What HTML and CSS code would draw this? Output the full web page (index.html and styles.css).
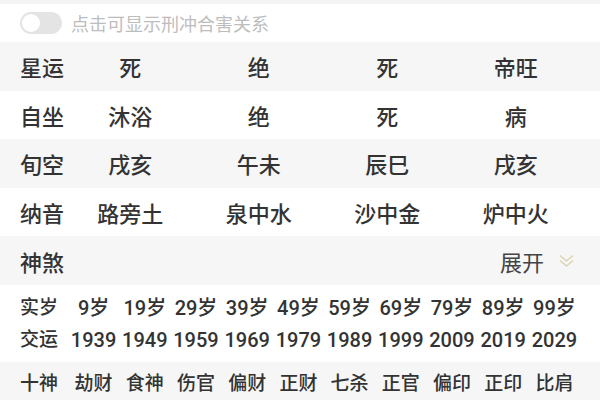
FILE: index.html
```html
<!DOCTYPE html>
<html lang="zh">
<head>
<meta charset="utf-8">
<link rel="stylesheet" href="styles.css">
</head>
<body>
<div class="page">
  <div class="top-strip"></div>
  <div class="toggle-row">
    <span class="switch"><span class="knob"></span></span>
    <span class="hint">点击可显示刑冲合害关系</span>
  </div>
  <div class="row gray">
    <span class="label">星运</span><span class="cell">死</span><span class="cell">绝</span><span class="cell">死</span><span class="cell">帝旺</span>
  </div>
  <div class="row">
    <span class="label">自坐</span><span class="cell">沐浴</span><span class="cell">绝</span><span class="cell">死</span><span class="cell">病</span>
  </div>
  <div class="row gray">
    <span class="label">旬空</span><span class="cell">戌亥</span><span class="cell">午未</span><span class="cell">辰巳</span><span class="cell">戌亥</span>
  </div>
  <div class="row">
    <span class="label">纳音</span><span class="cell">路旁土</span><span class="cell">泉中水</span><span class="cell">沙中金</span><span class="cell">炉中火</span>
  </div>
  <div class="shensha gray">
    <span class="label">神煞</span>
    <span class="expand">展开
      <svg class="chev" width="17" height="14" viewBox="0 0 17 14"><path d="M2 1.5 L8.5 7 L15 1.5 M2 6.5 L8.5 12 L15 6.5" fill="none" stroke="#d9d0ab" stroke-width="1.3"/></svg>
    </span>
  </div>
  <div class="luck">
    <div class="grid">
      <span class="label">实岁</span><span>9岁</span><span>19岁</span><span>29岁</span><span>39岁</span><span>49岁</span><span>59岁</span><span>69岁</span><span>79岁</span><span>89岁</span><span>99岁</span>
    </div>
    <div class="grid">
      <span class="label">交运</span><span>1939</span><span>1949</span><span>1959</span><span>1969</span><span>1979</span><span>1989</span><span>1999</span><span>2009</span><span>2019</span><span>2029</span>
    </div>
  </div>
  <div class="gods gray">
    <div class="grid">
      <span class="label">十神</span><span>劫财</span><span>食神</span><span>伤官</span><span>偏财</span><span>正财</span><span>七杀</span><span>正官</span><span>偏印</span><span>正印</span><span>比肩</span>
    </div>
  </div>
</div>
</body>
</html>
```
FILE: styles.css
```css
html, body {
  margin: 0;
  padding: 0;
  background: #ffffff;
}
body {
  font-family: "Noto Sans CJK SC", "Noto Sans", sans-serif;
  color: #333333;
  width: 600px;
  height: 400px;
  overflow: hidden;
}
.gray {
  background: #f6f6f6;
}
.top-strip {
  height: 4px;
  background: #f4f4f4;
}
.toggle-row {
  height: 38px;
  display: flex;
  align-items: center;
  padding-left: 20px;
  gap: 9px;
}
.switch {
  width: 42px;
  height: 22px;
  border-radius: 11px;
  background: #e4e4e4;
  display: flex;
  align-items: center;
  padding-left: 2px;
  box-sizing: border-box;
}
.knob {
  width: 18px;
  height: 18px;
  border-radius: 50%;
  background: #ffffff;
}
.hint {
  font-size: 18px;
  color: #bdbdbd;
  line-height: 1;
}
.row {
  height: 48.6px;
  display: grid;
  grid-template-columns: 46px repeat(4, 1fr);
  align-items: center;
  padding: 0 20px;
  font-size: 22px;
  font-weight: 500;
}
.label {
  font-weight: 500;
  white-space: nowrap;
}
.cell {
  text-align: center;
}
.shensha {
  height: 48.6px;
  display: flex;
  align-items: center;
  justify-content: space-between;
  padding: 0 25px 0 20px;
  font-size: 22px;
}
.expand {
  display: flex;
  align-items: center;
  gap: 14px;
  color: #444444;
  font-weight: 400;
}
.luck {
  height: 77px;
  box-sizing: border-box;
  padding-top: 7px;
}
.grid {
  display: grid;
  grid-template-columns: 48px repeat(10, 1fr);
  padding: 0 20px;
  font-family: "Roboto", "Noto Sans CJK SC", sans-serif;
  font-size: 20px;
  font-weight: 500;
  line-height: 32px;
  text-align: center;
  white-space: nowrap;
}
.grid .label {
  text-align: left;
  font-size: 19px;
}
.gods {
  height: 38px;
  padding-top: 6px;
  box-sizing: border-box;
}
.gods .grid span {
  font-size: 19px;
}
```
